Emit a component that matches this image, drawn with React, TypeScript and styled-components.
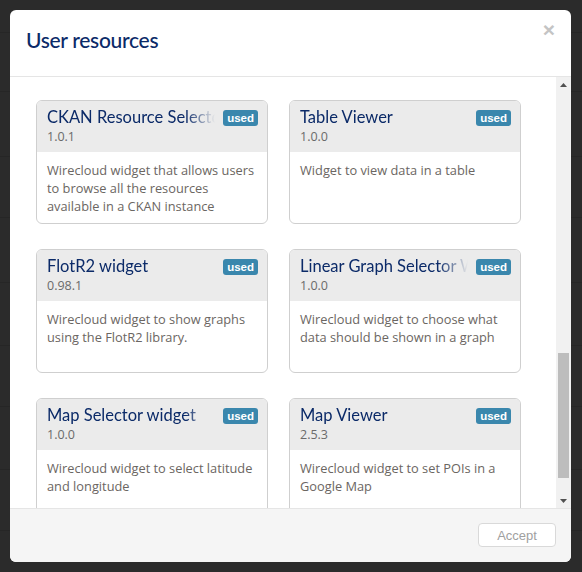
import React from "react";
import styled, { createGlobalStyle } from "styled-components";

const Global = createGlobalStyle`
  html, body { margin: 0; padding: 0; }
  body {
    width: 582px;
    height: 572px;
    overflow: hidden;
    background: #2b2b2b;
    font-family: "Open Sans", "Liberation Sans", sans-serif;
  }
`;

const Page = styled.div`
  position: relative;
  width: 582px;
  height: 572px;
  background: #2b2b2b;
  overflow: hidden;
`;

const Backdrop = styled.div`
  display: flex;
  flex-direction: column;
`;

const BackRow = styled.div<{ $h: number }>`
  height: ${(p) => p.$h}px;
  border-bottom: 1px solid #262626;
`;

const Modal = styled.div`
  position: absolute;
  left: 10px;
  top: 10px;
  width: 561px;
  height: 552px;
  background: #fff;
  border-radius: 6px;
  display: flex;
  flex-direction: column;
  overflow: hidden;
`;

const Header = styled.div`
  height: 66px;
  flex: none;
  border-bottom: 1px solid #e5e5e5;
  display: flex;
  align-items: flex-start;
  justify-content: space-between;
  padding: 0 16px 0 16px;
`;

const Title = styled.h3`
  margin: 16px 0 0 0;
  font-family: "Lato", "Liberation Sans", sans-serif;
  font-weight: 500;
  font-size: 21px;
  line-height: 28px;
  color: #0b2a68;
  letter-spacing: -0.3px;
`;

const Close = styled.span`
  margin-top: 9px;
  font-family: "Liberation Sans", sans-serif;
  font-size: 21px;
  font-weight: bold;
  color: #c4c4c4;
  line-height: 22px;
`;

const Body = styled.div`
  flex: 1;
  display: flex;
  min-height: 0;
`;

const Content = styled.div`
  flex: 1;
  overflow: hidden;
  padding: 23px 0 0 26px;
  display: grid;
  grid-template-columns: 232px 232px;
  grid-auto-rows: 124px;
  column-gap: 21px;
  row-gap: 25px;
  align-content: start;
`;

const Card = styled.div`
  border: 1px solid #cfcfcf;
  border-radius: 6px;
  overflow: hidden;
  display: flex;
  flex-direction: column;
  background: #fff;
`;

const CardHead = styled.div`
  background: #ebebeb;
  height: 51px;
  padding: 6px 9px 0 10px;
  box-sizing: border-box;
`;

const TitleRow = styled.div`
  display: flex;
  align-items: flex-start;
  gap: 8px;
`;

const CardTitle = styled.div`
  flex: 1;
  min-width: 0;
  white-space: nowrap;
  overflow: hidden;
  font-family: "Lato", "Liberation Sans", sans-serif;
  font-size: 16.5px;
  line-height: 21px;
  color: #0b2a68;
  -webkit-mask-image: linear-gradient(to right, #000 calc(100% - 30px), transparent 100%);
  mask-image: linear-gradient(to right, #000 calc(100% - 30px), transparent 100%);
`;

const Badge = styled.span`
  flex: none;
  margin-top: 3px;
  background: #3a87ad;
  color: #fff;
  font-family: "Liberation Sans", sans-serif;
  font-weight: bold;
  font-size: 11.5px;
  line-height: 16px;
  height: 16px;
  padding: 0 4px;
  border-radius: 3px;
`;

const Version = styled.div`
  font-size: 12.5px;
  line-height: 18px;
  color: #6a6a6a;
`;

const CardBody = styled.div`
  padding: 9px 10px 0 10px;
  font-size: 12.8px;
  line-height: 18px;
  color: #6b6662;
`;

const Scrollbar = styled.div`
  width: 15px;
  flex: none;
  background: #f1f1f1;
  display: flex;
  flex-direction: column;
  align-items: center;
`;

const Arrow = styled.div`
  height: 15px;
  width: 15px;
  display: flex;
  align-items: center;
  justify-content: center;
`;

const Track = styled.div`
  flex: 1;
  width: 100%;
  display: flex;
  flex-direction: column;
  align-items: center;
`;

const Thumb = styled.div<{ $top: number; $h: number }>`
  margin-top: ${(p) => p.$top}px;
  height: ${(p) => p.$h}px;
  width: 11px;
  background: #bdbdbd;
`;

const Footer = styled.div`
  height: 54px;
  flex: none;
  border-top: 1px solid #e5e5e5;
  background: #f5f5f5;
  display: flex;
  align-items: flex-start;
  justify-content: flex-end;
  padding: 14px 15px 0 0;
  box-sizing: border-box;
`;

const Button = styled.button`
  width: 78px;
  height: 24px;
  background: #fff;
  border: 1px solid #d9d9d9;
  border-radius: 4px;
  color: #a0a0a0;
  font-family: "Liberation Sans", sans-serif;
  font-size: 13px;
  padding: 0;
`;

type Res = { name: string; version: string; desc: string };

const resources: Res[] = [
  {
    name: "CKAN Resource Selector Widget",
    version: "1.0.1",
    desc: "Wirecloud widget that allows users to browse all the resources available in a CKAN instance",
  },
  { name: "Table Viewer", version: "1.0.0", desc: "Widget to view data in a table" },
  {
    name: "FlotR2 widget",
    version: "0.98.1",
    desc: "Wirecloud widget to show graphs using the FlotR2 library.",
  },
  {
    name: "Linear Graph Selector Widget",
    version: "1.0.0",
    desc: "Wirecloud widget to choose what data should be shown in a graph",
  },
  {
    name: "Map Selector widget",
    version: "1.0.0",
    desc: "Wirecloud widget to select latitude and longitude",
  },
  {
    name: "Map Viewer",
    version: "2.5.3",
    desc: "Wirecloud widget to set POIs in a Google Map",
  },
];

const backRows = [32, 58, 64, 60, 64, 62, 60, 62, 60, 60];

export default function App() {
  return (
    <Page>
      <Global />
      <Backdrop>
        {backRows.map((h, i) => (
          <BackRow key={i} $h={h} />
        ))}
      </Backdrop>
      <Modal>
        <Header>
          <Title>User resources</Title>
          <Close>×</Close>
        </Header>
        <Body>
          <Content>
            {resources.map((r) => (
              <Card key={r.name}>
                <CardHead>
                  <TitleRow>
                    <CardTitle>{r.name}</CardTitle>
                    <Badge>used</Badge>
                  </TitleRow>
                  <Version>{r.version}</Version>
                </CardHead>
                <CardBody>{r.desc}</CardBody>
              </Card>
            ))}
          </Content>
          <Scrollbar>
            <Arrow>
              <svg width="7" height="4" viewBox="0 0 7 4">
                <path d="M0 4 L3.5 0 L7 4 Z" fill="#505050" />
              </svg>
            </Arrow>
            <Track>
              <Thumb $top={261} $h={125} />
            </Track>
            <Arrow>
              <svg width="7" height="4" viewBox="0 0 7 4">
                <path d="M0 0 L3.5 4 L7 0 Z" fill="#505050" />
              </svg>
            </Arrow>
          </Scrollbar>
        </Body>
        <Footer>
          <Button>Accept</Button>
        </Footer>
      </Modal>
    </Page>
  );
}
